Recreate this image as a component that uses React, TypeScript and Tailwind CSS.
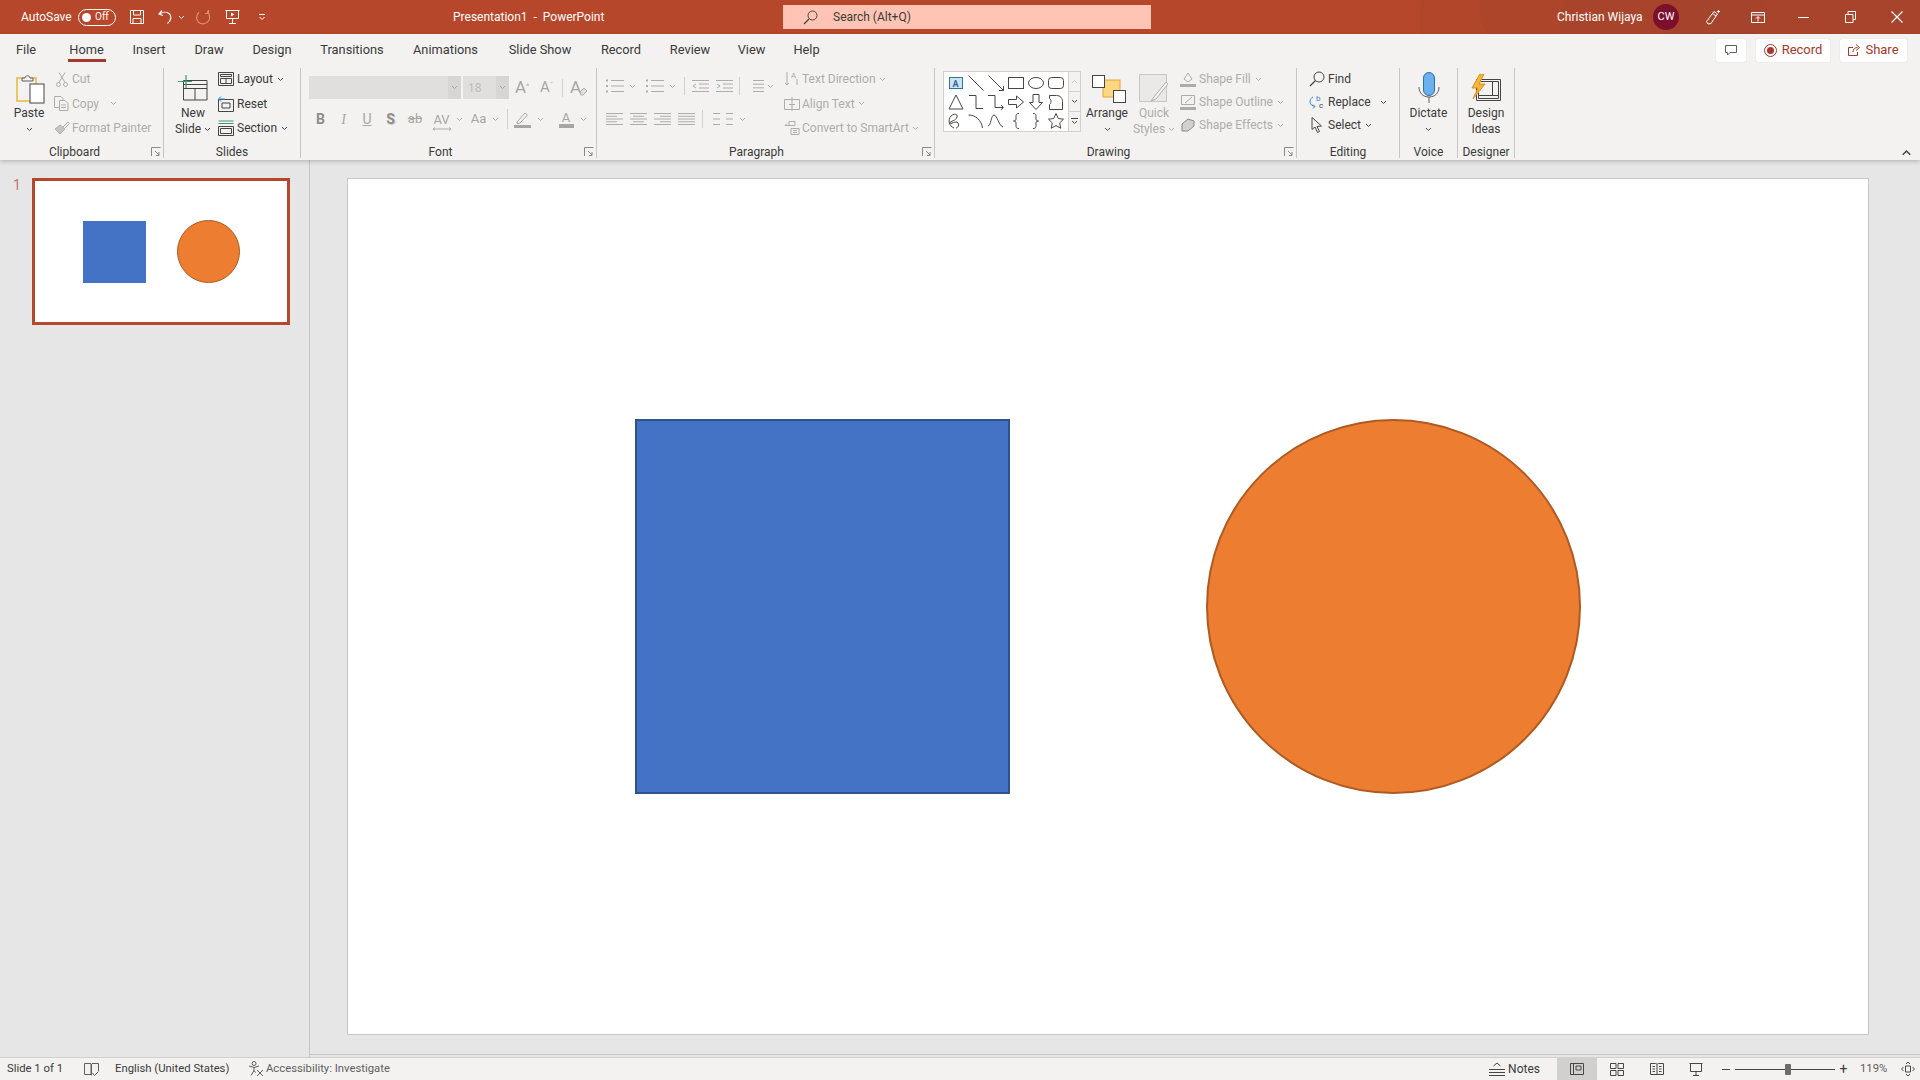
import type { ReactNode } from "react";

const DIS = "#aeacaa";
const INK = "#484644";

function Chev({ color = INK, className = "" }: { color?: string; className?: string }) {
  return (
    <svg width="7" height="5" viewBox="0 0 7 5" className={className}>
      <path d="M1 1l2.5 2.5L6 1" fill="none" stroke={color} strokeWidth="1" />
    </svg>
  );
}

function Ico({ w = 16, h = 16, children, className = "" }: { w?: number; h?: number; children: ReactNode; className?: string }) {
  return (
    <svg width={w} height={h} viewBox={`0 0 ${w} ${h}`} fill="none" strokeWidth="1" className={`shrink-0 ${className}`}>
      {children}
    </svg>
  );
}

// justified / aligned text lines, x1 and x2 per line
function Lines({ w = 17, rows }: { w?: number; rows: [number, number][] }) {
  return (
    <Ico w={w} h={14}>
      {rows.map(([a, b], i) => (
        <path key={i} d={`M${a} ${1.5 + (i * 11) / (rows.length - 1)}H${b}`} stroke={DIS} />
      ))}
    </Ico>
  );
}

function Bullets() {
  return (
    <Ico w={18} h={14}>
      {[1.5, 7, 12.5].map((y) => (
        <g key={y}>
          <rect x="0" y={y - 1} width="2" height="2" fill={DIS} />
          <path d={`M5 ${y}H18`} stroke={DIS} />
        </g>
      ))}
    </Ico>
  );
}

function Indent({ flip }: { flip?: boolean }) {
  return (
    <Ico w={17} h={14}>
      <path d="M0 1.500H17M7 5H17M7 9H17M0 12.500H17" stroke={DIS} />
      <path d={flip ? "M1 5l3 2-3 2" : "M4 5L1 7l3 2"} stroke="#8fb4d4" />
    </Ico>
  );
}

function Launcher() {
  return (
    <svg width="10" height="10" viewBox="0 0 10 10" className="absolute right-[2px] bottom-[1px]" fill="none" stroke="#8a8886">
      <path d="M.5 9V.5H9.5M4 4l4 4M8 5v3.5H5" />
    </svg>
  );
}

function Group({ label, className, labelClass = "", launcher, children }: { label: string; className: string; labelClass?: string; launcher?: boolean; children: ReactNode }) {
  return (
    <div className={`relative flex h-[90px] shrink-0 flex-col border-r border-[#c8c6c4] ${className}`}>
      <div className="flex h-[78px]">{children}</div>
      <div className={`h-[12px] text-center text-[12px] leading-[12px] text-[#3b3a39] ${labelClass}`}>{label}</div>
      {launcher && <Launcher />}
    </div>
  );
}

function BigBtn({ icon, lines, className, disabled, chevOwnLine = true }: { icon: ReactNode; lines: string[]; className: string; disabled?: boolean; chevOwnLine?: boolean }) {
  const c = disabled ? DIS : INK;
  return (
    <div className={`flex shrink-0 flex-col items-center text-[12px] leading-[16px] ${disabled ? "text-[#aeacaa]" : "text-[#3b3a39]"} ${className}`}>
      <div className="flex h-[37px] items-center justify-center">{icon}</div>
      <div className="text-center">{lines[0]}</div>
      {lines[1] ? (
        <div className="flex items-center gap-[3px]">
          {lines[1]}
          {chevOwnLine && <Chev color={c} />}
        </div>
      ) : (
        <div className="flex h-[16px] items-center">
          <Chev color={c} />
        </div>
      )}
    </div>
  );
}

function SmallBtn({ icon, label, chev, disabled, h = "h-[22px]", gap = "gap-[2px]", iconBox = "w-[17px]", after }: { icon: ReactNode; label: string; chev?: boolean; disabled?: boolean; h?: string; gap?: string; iconBox?: string; after?: string }) {
  return (
    <div className={`flex items-center text-[12px] ${h} ${gap} ${disabled ? "text-[#aeacaa]" : "text-[#3b3a39]"}`}>
      <div className={`flex justify-center ${iconBox}`}>{icon}</div>
      <span className={after}>{label}</span>
      {chev && <Chev color={disabled ? DIS : INK} className="ml-[1px]" />}
    </div>
  );
}

function Sep({ className = "" }: { className?: string }) {
  return <div className={`w-px shrink-0 bg-[#d2d0ce] ${className}`} />;
}

function TitleBar() {
  return (
    <div className="relative flex h-[34px] shrink-0 items-center overflow-hidden bg-[#b7472a] text-[12px] text-white">
      <svg className="absolute right-0 top-0" width="500" height="34" viewBox="0 0 500 34">
        <circle cx="40" cy="24" r="44" fill="#b1462a" />
        <circle cx="120" cy="6" r="60" fill="#ad452b" />
        <circle cx="210" cy="30" r="70" fill="#a8442b" />
        <circle cx="320" cy="8" r="80" fill="#a5432c" />
        <circle cx="430" cy="30" r="90" fill="#a8442b" />
      </svg>
      <span className="relative ml-[21px] w-[57px]">AutoSave</span>
      <div className="relative flex h-[17px] w-[38px] items-center rounded-full border border-white pl-[3px]">
        <div className="h-[9px] w-[9px] rounded-full bg-white" />
        <span className="ml-[4px] text-[10px] leading-none">Off</span>
      </div>
      <div className="relative ml-[13px] flex w-[28px] items-center">
        <Ico>
          <path d="M1.5 1.5h13v13h-13zM4.5 1.5v4.5h7V1.5M4 14.5V9.5h8v5" stroke="#fff" />
        </Ico>
      </div>
      <div className="relative flex w-[38px] items-center gap-[4px]">
        <Ico w={17}>
          <path d="M5 1.5L2 5l4 1.5M2.5 5.2C5 3 9 2.500 12 4.500c3 2.500 2.500 6.500-1.500 10" stroke="#fff" strokeWidth="1.2" />
        </Ico>
        <Chev color="#fff" />
      </div>
      <div className="relative flex w-[30px] items-center">
        <Ico w={17}>
          <path d="M12 2.500C15 5 15.500 9 13.500 12c-2.500 3.500-7 3.800-10 1.300C.8 10.800 1 6 4 3.200M13.500 1v3.500H10" stroke="#dc8f78" strokeWidth="1.2" />
        </Ico>
      </div>
      <div className="relative flex w-[33px] items-center">
        <Ico w={15}>
          <path d="M.5 1.500h14M1.500 1.500v8h12v-8M7.500 9.500v4.500M4 14.500h7" stroke="#fff" />
          <path d="M6 3.500l3.500 2-3.500 2z" fill="#fff" />
        </Ico>
      </div>
      <svg width="8" height="8" viewBox="0 0 8 8" className="relative">
        <path d="M1 1.500h6M1.500 4l2.500 2.500L6.500 4" fill="none" stroke="#fff" />
      </svg>
      <span className="relative ml-[187px] w-[330px]">Presentation1&nbsp; -&nbsp; PowerPoint</span>
      <div className="relative flex h-[24px] w-[368px] items-center bg-[#ffc4b3] pl-[20px] text-[#3b3a39]">
        <Ico w={15} h={15}>
          <circle cx="9.500" cy="5.500" r="4.500" stroke="#444" />
          <path d="M6 9l-5 5" stroke="#444" strokeWidth="1.3" />
        </Ico>
        <span className="ml-[15px]">Search (Alt+Q)</span>
      </div>
      <span className="relative ml-[406px] w-[96px]">Christian Wijaya</span>
      <div className="relative flex h-[26px] w-[26px] items-center justify-center rounded-full bg-[#7d0f2c] text-[11px]">CW</div>
      <div className="relative ml-[26px] flex w-[46px]">
        <Ico w={17}>
          <path d="M3 15L1.500 12.500 9 2.500l3.500 2.500L6 14.500zM7.500 4.500l3.500 2.500M13.500 1v3M12 2.500h3" stroke="#fff" />
        </Ico>
      </div>
      <div className="relative flex w-[47px]">
        <Ico w={14} h={14}>
          <path d="M.5 2.500h13v10H.500zM.5 5h13M7 11.500V7M5 8.500L7 6.500l2 2" stroke="#fff" />
        </Ico>
      </div>
      <div className="relative flex w-[47px]">
        <Ico w={11} h={11}>
          <path d="M0 5.500h11" stroke="#fff" />
        </Ico>
      </div>
      <div className="relative flex w-[46px]">
        <Ico w={11} h={12}>
          <path d="M.5 3.500h7.500v8H.5zM3 3.500V.5h7.500v8H8" stroke="#fff" />
        </Ico>
      </div>
      <Ico w={12} h={12} className="relative">
        <path d="M.5.5l11 11M11.500.5l-11 11" stroke="#fff" strokeWidth="1.200" />
      </Ico>
    </div>
  );
}

const tabs: [string, string][] = [
  ["File", "w-[52px]"],
  ["Home", "w-[69px]"],
  ["Insert", "w-[56px]"],
  ["Draw", "w-[64px]"],
  ["Design", "w-[62px]"],
  ["Transitions", "w-[98px]"],
  ["Animations", "w-[89px]"],
  ["Slide Show", "w-[100px]"],
  ["Record", "w-[62px]"],
  ["Review", "w-[76px]"],
  ["View", "w-[47px]"],
  ["Help", "w-[63px]"],
];

function TabRow() {
  return (
    <div className="flex h-[32px] items-center bg-[#f3f2f1] text-[12.800px] text-[#3b3a39]">
      {tabs.map(([t, w]) => (
        <div key={t} className={`relative flex h-full items-center justify-center ${w}`}>
          {t}
          {t === "Home" && <div className="absolute left-[16px] right-[15px] bottom-[4px] h-[3px] bg-[#a5372b]" />}
        </div>
      ))}
      <div className="ml-auto mr-[13px] flex items-center gap-[10px] text-[13px] text-[#a5372b]">
        <div className="flex h-[23px] w-[30px] items-center justify-center rounded-[2px] bg-white shadow-[0_0_1px_rgba(0,0,0,0.2)]">
          <Ico w={12} h={12}>
            <path d="M.5 1.500h11v7H5l-2.500 2.500V8.500H.5z" stroke="#605e5c" />
          </Ico>
        </div>
        <div className="flex h-[23px] w-[74px] items-center justify-center gap-[5px] rounded-[2px] bg-white shadow-[0_0_1px_rgba(0,0,0,0.2)]">
          <svg width="13" height="13" viewBox="0 0 13 13">
            <circle cx="6.500" cy="6.500" r="6" fill="none" stroke="#a5372b" />
            <circle cx="6.500" cy="6.500" r="3.500" fill="#a5372b" />
          </svg>
          Record
        </div>
        <div className="flex h-[23px] w-[67px] items-center justify-center gap-[5px] rounded-[2px] bg-white shadow-[0_0_1px_rgba(0,0,0,0.2)]">
          <Ico w={12} h={12}>
            <path d="M5 3.500H.5v8h9V8M5 8c0-3 2-4.500 4.500-4.500M8 .5l3.500 3-3.500 3" stroke="#a5372b" />
          </Ico>
          Share
        </div>
      </div>
    </div>
  );
}

function ClipboardGroup() {
  return (
    <Group label="Clipboard" className="w-[164px]" labelClass="pr-[14px]" launcher>
      <BigBtn
        className="ml-[9px] w-[40px]"
        lines={["Paste"]}
        icon={
          <svg width="30" height="30" viewBox="0 0 30 30" fill="none" className="ml-[3px] mt-[5px]">
            <rect x="1" y="4" width="19" height="23" fill="#f3f2f1" stroke="#e8b83c" strokeWidth="1.500" />
            <path d="M6 7V4h3c0-3 5-3 5 0h3v3z" fill="#f3f2f1" stroke="#605e5c" />
            <rect x="14" y="10" width="14" height="19" fill="#fff" stroke="#444" />
          </svg>
        }
      />
      <div className="ml-[4px] flex flex-col gap-[2.500px]">
        <SmallBtn disabled label="Cut" icon={
          <Ico w={12} h={15}>
            <path d="M3 .5l6 10M9 .5l-6 10" stroke={DIS} />
            <circle cx="2.500" cy="12.500" r="2" stroke={DIS} />
            <circle cx="9.500" cy="12.500" r="2" stroke={DIS} />
          </Ico>
        } />
        <SmallBtn disabled label="Copy" chev after="mr-[8px]" icon={
          <Ico w={15} h={15}>
            <path d="M5 11.500H.5V.5H7l2 2v2M5.500 4.500H11l3 3v7H5.500zM7 9h5M7 11.500h5" stroke={DIS} />
          </Ico>
        } />
        <SmallBtn disabled label="Format Painter" icon={
          <Ico w={16} h={14}>
            <path d="M1 8l5-4 5 4-5 5z" fill="#c8c6c4" stroke={DIS} />
            <path d="M9 6l5-5 1.500 1.500-5 5" stroke={DIS} />
          </Ico>
        } />
      </div>
    </Group>
  );
}

function SlidesGroup() {
  return (
    <Group label="Slides" className="w-[137px]">
      <BigBtn
        className="ml-[7px] w-[44px]"
        lines={["New", "Slide"]}
        icon={
          <svg width="30" height="26" viewBox="0 0 30 26" fill="none" className="mt-[3px]">
            <path d="M5.500 5.500H29V25H5.500zM5.500 9.500H29M5.500 13.500H29M17 13.500V25" stroke="#444" />
            <path d="M8 0v13M0 6.500h14" stroke="#3d9970" strokeWidth="1.200" />
          </svg>
        }
      />
      <div className="ml-[2px] flex flex-col gap-[2.500px]">
        <SmallBtn label="Layout" chev gap="gap-[3px]" icon={
          <Ico>
            <path d="M.5 1.500h15v13H.5zM2.500 3.500h11v2h-11zM2.500 7.500h11v5h-11zM8 7.500v5" stroke="#444" />
          </Ico>
        } />
        <SmallBtn label="Reset" gap="gap-[3px]" icon={
          <Ico>
            <path d="M.5 3.500h15v12H.5zM4 7h8v5H4z" stroke="#444" />
            <path d="M3 .5L.5 3l2.500 2.500M1 3h6" stroke="#2b88d8" />
          </Ico>
        } />
        <SmallBtn label="Section" chev gap="gap-[3px]" icon={
          <Ico>
            <path d="M.5 1h15M.5 3.500h15" stroke="#3d9970" />
            <path d="M.5 6.500h15v9H.5zM2.500 8.500h11v5h-11z" stroke="#444" />
          </Ico>
        } />
      </div>
    </Group>
  );
}

function FItem({ w, children }: { w: string; children: ReactNode }) {
  return <div className={`flex shrink-0 items-center justify-center gap-[6px] ${w}`}>{children}</div>;
}

function FontGroup() {
  return (
    <Group label="Font" className="w-[296px]" labelClass="pr-[16px]" launcher>
      <div className="ml-[8px] flex flex-col pt-[8px] text-[#a8a6a4]">
        <div className="flex h-[23px] items-center">
          <div className="h-full w-[139px] bg-[#e1dfdd]" />
          <div className="flex h-full w-[13px] items-center justify-center bg-[#d8d6d4]"><Chev color="#a8a6a4" /></div>
          <div className="ml-[2px] flex h-full w-[33px] items-center bg-[#e1dfdd] pl-[5px] text-[12px] text-[#bdbbb9]">18</div>
          <div className="flex h-full w-[13px] items-center justify-center bg-[#d8d6d4]"><Chev color="#a8a6a4" /></div>
          <div className="ml-[6px] w-[19px] text-[17px] leading-none">A<sup className="text-[8px]">^</sup></div>
          <div className="ml-[6px] w-[19px] text-[15px] leading-none">A<sup className="text-[8px]">ˇ</sup></div>
          <Sep className="ml-[3px] h-[18px]" />
          <div className="relative ml-[7px] text-[17px] leading-none">
            A<span className="text-[11px]">ₒ</span>
            <svg width="9" height="9" viewBox="0 0 9 9" className="absolute right-[-3px] bottom-[0px]">
              <path d="M1 5l4-4 3 3-4 4H2z" fill="#e1dfdd" stroke={DIS} />
            </svg>
          </div>
        </div>
        <div className="mt-[8px] flex h-[24px] items-center text-[13px]">
          <FItem w="w-[23px]"><b className="text-[14px] font-bold text-[#8f8d8b]">B</b></FItem>
          <FItem w="w-[23px]"><i className="text-[14px] font-['Liberation_Serif',serif]">I</i></FItem>
          <FItem w="w-[24px]"><span className="text-[14px] underline">U</span></FItem>
          <FItem w="w-[23px]"><b className="text-[14px] font-bold text-[#8f8d8b] [text-shadow:1px_1px_0_#d2d0ce]">S</b></FItem>
          <FItem w="w-[26px]"><span className="line-through">ab</span></FItem>
          <FItem w="w-[40px]">
            <span className="relative leading-none">
              AV
              <svg width="18" height="4" viewBox="0 0 18 4" className="absolute left-0 top-[14px]">
                <path d="M0 2h18M2 .5L0 2l2 1.500M16 .5L18 2l-2 1.500" fill="none" stroke={DIS} />
              </svg>
            </span>
            <Chev color={DIS} />
          </FItem>
          <FItem w="w-[34px]">Aa<Chev color={DIS} /></FItem>
          <Sep className="ml-[5px] h-[20px]" />
          <div className="ml-[6px] flex w-[40px] items-center gap-[6px]">
            <Ico w={17} h={17}>
              <path d="M3 11L11 2l2.500 2-8 8.500H3z" stroke="#a8a6a4" />
              <path d="M0 14h17v3H0z" fill="#a8a6a4" />
            </Ico>
            <Chev color={DIS} />
          </div>
          <div className="ml-[4px] flex items-center gap-[6px]">
            <div className="flex w-[16px] flex-col items-center leading-[13px]">
              A
              <div className="h-[4px] w-[15px] bg-[#a8a6a4]" />
            </div>
            <Chev color={DIS} />
          </div>
        </div>
      </div>
    </Group>
  );
}

function ParagraphGroup() {
  return (
    <Group label="Paragraph" className="w-[338px]" labelClass="pr-[18px]" launcher>
      <div className="ml-[9px] flex w-[178px] shrink-0 flex-col pt-[8px]">
        <div className="flex h-[20px] items-center">
          <div className="flex w-[40px] items-center gap-[5px]"><Bullets /><Chev color={DIS} /></div>
          <div className="flex w-[38px] items-center gap-[5px]"><Bullets /><Chev color={DIS} /></div>
          <Sep className="h-[18px]" />
          <div className="ml-[7px]"><Indent /></div>
          <div className="ml-[7px]"><Indent flip /></div>
          <Sep className="ml-[6px] h-[18px]" />
          <div className="ml-[7px] flex items-center gap-[3px]">
            <Lines rows={[[6, 17], [6, 17], [6, 17], [6, 17]]} />
            <Chev color={DIS} />
          </div>
        </div>
        <div className="mt-[13px] flex h-[20px] items-center gap-[7px]">
          <Lines rows={[[0, 17], [0, 11], [0, 17], [0, 11], [0, 17]]} />
          <Lines rows={[[0, 17], [3, 14], [0, 17], [3, 14], [0, 17]]} />
          <Lines rows={[[0, 17], [6, 17], [0, 17], [6, 17], [0, 17]]} />
          <Lines rows={[[0, 17], [0, 17], [0, 17], [0, 17], [0, 17]]} />
          <Sep className="h-[18px]" />
          <div className="ml-[3px] flex items-center gap-[5px]">
            <Lines rows={[[0, 7], [0, 7], [0, 7]]} w={8} />
            <Lines rows={[[0, 7], [0, 7], [0, 7]]} w={8} />
            <Chev color={DIS} />
          </div>
        </div>
      </div>
      <div className="flex flex-col gap-[2.500px]">
        <SmallBtn disabled label="Text Direction" chev iconBox="w-[16px]" icon={
          <Ico>
            <path d="M3 1v13M1 12l2 2 2-2M13 14V8" stroke={DIS} />
            <text x="7" y="7" fontSize="8" fill={DIS}>A</text>
          </Ico>
        } />
        <SmallBtn disabled label="Align Text" chev iconBox="w-[16px]" icon={
          <Ico>
            <path d="M.5 3.500h15v10H.5zM8 1v14M5 8.500h6" stroke={DIS} />
          </Ico>
        } />
        <SmallBtn disabled label="Convert to SmartArt" chev iconBox="w-[16px]" icon={
          <Ico>
            <path d="M5 1.500h6v4H5zM1 5.500h5M1 5.500l2-2M7 8.500h8v6H7zM9 10.500h4M9 12.500h4" stroke={DIS} />
          </Ico>
        } />
      </div>
    </Group>
  );
}

const S = "#484644";
const shapes: ReactNode[] = [
  <g key="a"><rect x="2.500" y="3.500" width="13" height="11" fill="#cfe3f5" stroke="#2a7a8a" /><text x="5.500" y="12.500" fontSize="9" fontWeight="700" fill="#2a6a9a">A</text></g>,
  <path key="b" d="M1.500 1.500l15 15" stroke={S} />,
  <path key="c" d="M1.500 1.500l15 15M16.500 12v4.500H12" stroke={S} />,
  <rect key="d" x="1.500" y="3.500" width="15" height="11" stroke={S} />,
  <ellipse key="e" cx="9" cy="9" rx="7.500" ry="5.500" stroke={S} />,
  <rect key="f" x="1.500" y="3.500" width="15" height="11" rx="3" stroke={S} />,
  <path key="g" d="M9 2l7 14H2z" stroke={S} />,
  <path key="h" d="M2 2.500h7v13h7" stroke={S} />,
  <path key="i" d="M1 2.500h7v12h8M14 12l2.500 2.500L14 17" stroke={S} />,
  <path key="j" d="M1.500 6.500h8V3l7 6-7 6v-3.500h-8z" stroke={S} />,
  <path key="k" d="M6 1.500h6v8h3.500L9 16.500 2.500 9.500H6z" stroke={S} />,
  <path key="l" d="M2.500 2.500h7c4 0 6 3 6 6v8h-13v-5c2-1 2-5 0-6z" stroke={S} />,
  <path key="m" d="M7 16C2 14 .5 8 4 4c3-3 7-2 6 1-1 4-7 4-7 6 0 2 6-3 8 0s-1 5-2 5" stroke={S} />,
  <path key="n" d="M1.500 3c7 0 13 5 14 13" stroke={S} />,
  <path key="o" d="M1 14C4 14 4 3 7 3s5 11 9 12" stroke={S} />,
  <path key="p" d="M12 1.500C9 1.500 9 3 9 5v2c0 1.500-1 2-2.500 2C8 9 9 9.500 9 11v2c0 2 0 3.500 3 3.500" stroke={S} />,
  <path key="q" d="M6 1.500C9 1.500 9 3 9 5v2c0 1.500 1 2 2.500 2C10 9 9 9.500 9 11v2c0 2 0 3.500-3 3.500" stroke={S} />,
  <path key="r" d="M9 1.500l2.300 5 5.200.7-3.800 3.700 1 5.300L9 13.600l-4.700 2.600 1-5.300L1.500 7.200l5.200-.7z" stroke={S} />,
];

function DrawingGroup() {
  return (
    <Group label="Drawing" className="w-[362px]" labelClass="pr-[14px]" launcher>
      <div className="ml-[8px] mt-[3px] flex h-[61px] w-[138px] shrink-0 border border-[#d2d0ce]">
        <div className="grid w-[124px] grid-cols-6 grid-rows-3 bg-white px-[2px] py-[1px]">
          {shapes.map((s, i) => (
            <div key={i} className="flex items-center justify-center">
              <svg width="18" height="18" viewBox="0 0 18 18" fill="none">{s}</svg>
            </div>
          ))}
        </div>
        <div className="flex flex-1 flex-col border-l border-[#d2d0ce]">
          <div className="flex flex-1 items-center justify-center"><Chev color="#c8c6c4" className="rotate-180" /></div>
          <div className="flex flex-1 items-center justify-center border-y border-[#d2d0ce]"><Chev /></div>
          <div className="flex flex-1 flex-col items-center justify-center gap-[1px]">
            <div className="h-px w-[7px] bg-[#484644]" />
            <Chev />
          </div>
        </div>
      </div>
      <BigBtn
        className="ml-[4px] w-[44px]"
        lines={["Arrange"]}
        icon={
          <svg width="34" height="28" viewBox="0 0 34 28" fill="none" className="ml-[3px] mt-[5px]">
            <rect x="11" y="5" width="17" height="17" fill="#fcd77f" stroke="#e8a33c" />
            <rect x=".5" y=".5" width="12" height="12" fill="#fff" stroke="#444" />
            <rect x="21.500" y="15.500" width="12" height="12" fill="#fff" stroke="#444" />
          </svg>
        }
      />
      <BigBtn
        className="ml-[3px] w-[44px]"
        disabled
        lines={["Quick", "Styles"]}
        icon={
          <svg width="30" height="30" viewBox="0 0 30 30" fill="none" className="mt-[5px]">
            <rect x=".5" y=".5" width="27" height="27" fill="#ebe9e7" stroke="#c8c6c4" />
            <path d="M27 8L15 23l-3 4 5-2L29 10z" fill="#f3f2f1" stroke="#b3b1af" />
          </svg>
        }
      />
      <div className="ml-[4px] flex flex-col gap-[1px]">
        <SmallBtn disabled label="Shape Fill" chev iconBox="w-[16px]" gap="gap-[3px]" icon={
          <Ico>
            <path d="M4 8l4-6 4 6-4 3z" stroke={DIS} />
            <path d="M0 13h16v3H0z" fill={DIS} />
          </Ico>
        } />
        <SmallBtn disabled label="Shape Outline" chev iconBox="w-[16px]" gap="gap-[3px]" icon={
          <Ico>
            <path d="M1.500 1.500h13v9h-13zM5 9l7-6" stroke={DIS} />
            <path d="M0 13h16v3H0z" fill={DIS} />
          </Ico>
        } />
        <SmallBtn disabled label="Shape Effects" chev iconBox="w-[16px]" gap="gap-[3px]" icon={
          <Ico>
            <path d="M2 7l6-5 6 2v5l-6 5H2z" fill="#d2d0ce" stroke="#8a8886" />
          </Ico>
        } />
      </div>
    </Group>
  );
}

function EditingGroup() {
  return (
    <Group label="Editing" className="w-[103px]">
      <div className="ml-[12px] flex flex-col gap-[1px]">
        <SmallBtn label="Find" gap="gap-[3px]" h="h-[22px]" iconBox="w-[16px]" icon={
          <Ico>
            <circle cx="10" cy="6" r="5" stroke="#484644" />
            <path d="M6.500 9.500L1 15" stroke="#484644" strokeWidth="1.300" />
          </Ico>
        } />
        <div className="flex items-center">
          <SmallBtn label="Replace" gap="gap-[3px]" iconBox="w-[16px]" icon={
            <Ico>
              <path d="M4 3C1 4 0 9 2.500 11l3 1.500M4 10.500l2 2-2 2" stroke="#2b88d8" />
              <text x="7" y="7" fontSize="8" fill="#2b88d8">b</text>
              <text x="10" y="14" fontSize="8" fill="#444">c</text>
            </Ico>
          } />
          <Chev className="ml-[9px]" />
        </div>
        <SmallBtn label="Select" chev gap="gap-[3px]" iconBox="w-[16px]" icon={
          <Ico>
            <path d="M3 .5v12l3-2.500 2.500 5.500 2-1L8 9.500l4.500-.5z" stroke="#484644" />
          </Ico>
        } />
      </div>
    </Group>
  );
}

function Ribbon() {
  return (
    <div className="relative z-10 flex h-[126px] shrink-0 flex-col bg-[#f3f2f1] shadow-[0_2px_4px_rgba(0,0,0,0.18)]">
      <TabRow />
      <div className="flex items-start pt-[2px]">
        <ClipboardGroup />
        <SlidesGroup />
        <FontGroup />
        <ParagraphGroup />
        <DrawingGroup />
        <EditingGroup />
        <Group label="Voice" className="w-[58px]">
          <BigBtn
            className="w-full"
            lines={["Dictate"]}
            icon={
              <svg width="22" height="32" viewBox="0 0 22 32" fill="none" className="mt-[3px]">
                <rect x="5.500" y=".5" width="11" height="23" rx="5.500" fill="#6cb0ee" stroke="#2b6fb0" />
                <path d="M1 15c0 6 4 10 10 10s10-4 10-10M11 25v6" stroke="#605e5c" />
              </svg>
            }
          />
        </Group>
        <Group label="Designer" className="w-[57px]">
          <BigBtn
            className="w-full"
            chevOwnLine={false}
            lines={["Design", "Ideas"]}
            icon={
              <svg width="30" height="28" viewBox="0 0 30 28" fill="none" className="mt-[2px]">
                <path d="M5.500 5.500h24v21h-24zM7.500 7.500h20v17h-20zM7.500 21.500h20M21.500 7.500v14" stroke="#444" />
                <path d="M9 0L1 14h6l-5 11 12-15H8l5-10z" fill="#f7b733" stroke="#d98b1f" />
              </svg>
            }
          />
        </Group>
        <div className="ml-auto mr-[10px] mt-[82px]">
          <Chev className="rotate-180 scale-150" color="#484644" />
        </div>
      </div>
    </div>
  );
}

function StatusBar() {
  return (
    <div className="flex h-[23px] shrink-0 items-center border-t border-[#d2d0ce] bg-[#f3f2f1] text-[11.300px] text-[#3b3a39]">
      <span className="ml-[7px] w-[77px]">Slide 1 of 1</span>
      <Ico w={15} h={15}>
        <path d="M.5 1.500h6.500v11H.5zM8 1.500h6.500V9M7.500 2v11.500M8.500 11l2 2.500 4-4" stroke="#605e5c" />
      </Ico>
      <span className="ml-[16px] w-[133px]">English (United States)</span>
      <Ico>
        <circle cx="6" cy="2.500" r="2" stroke="#605e5c" />
        <path d="M1 5l5 1.500L11 5M6 6.500v3l-3 5M6 9.500l1.500 2M9 9l6 6M15 9l-6 6" stroke="#605e5c" />
      </Ico>
      <span className="ml-[2px] text-[#605e5c]">Accessibility: Investigate</span>
      <div className="ml-auto flex h-full items-center">
        <Ico w={16} h={14}>
          <path d="M0 7.500h16M0 10.500h16M0 13.500h16M4.500 4L8 1l3.500 3" stroke="#484644" />
        </Ico>
        <span className="ml-[3px] mr-[17px] text-[12px]">Notes</span>
        <div className="flex h-full w-[40px] items-center justify-center bg-[#d2d0ce]">
          <Ico w={14} h={14}>
            <path d="M.5 1.500h13v11H.5zM3.500 1.500v11M6 4h5v4H6z" stroke="#484644" />
          </Ico>
        </div>
        <div className="flex w-[40px] justify-center">
          <Ico w={14} h={14}>
            <path d="M.5 1.500h5.500v5H.5zM8 1.500h5.500v5H8zM.5 8.500h5.500v5H.5zM8 8.500h5.500v5H8z" stroke="#484644" />
          </Ico>
        </div>
        <div className="flex w-[39px] justify-center">
          <Ico w={14} h={14}>
            <path d="M.5 1.500h5c1 0 1.500 .5 1.500 1 0-.5.5-1 1.500-1h5v11h-13zM7 2.500v10M2.500 4.500h2.500M2.500 7h2.500M2.500 9.500h2.500M9 4.500h2.500M9 7h2.500M9 9.500h2.500" stroke="#484644" />
          </Ico>
        </div>
        <div className="flex w-[39px] justify-center">
          <Ico w={14} h={14}>
            <path d="M.5 1.500h13M1.500 1.500v8h11v-8M7 9.500v4M4 13.500h6" stroke="#484644" />
          </Ico>
        </div>
        <div className="ml-[7px] h-px w-[8px] bg-[#484644]" />
        <div className="relative ml-[5px] flex h-full w-[100px] items-center">
          <div className="h-px w-full bg-[#484644]" />
          <div className="absolute left-[50px] h-[11px] w-[6px] rounded-[1px] bg-[#6e6c6a]" />
        </div>
        <span className="ml-[3px] w-[11px] text-center text-[14px] leading-none">+</span>
        <span className="ml-[11px] w-[41px] text-[#605e5c]">119%</span>
        <svg width="14" height="16" viewBox="0 0 14 16" fill="none" className="mr-[5px]">
          <path d="M4.500 5h5v6h-5zM2.500 6L.5 8l2 2M11.500 6l2 2-2 2M5 3l2-2 2 2M5 13l2 2 2-2" stroke="#484644" />
        </svg>
      </div>
    </div>
  );
}

export default function App() {
  return (
    <div className="flex h-[1080px] w-[1920px] flex-col overflow-hidden bg-[#e6e6e6] font-['Roboto',sans-serif]">
      <TitleBar />
      <Ribbon />
      <div className="flex min-h-0 flex-1">
        <div className="flex w-[310px] shrink-0 border-r border-[#c8c6c4] pl-[13px] pt-[18px]">
          <span className="mt-[-3px] w-[19px] text-[14px] text-[#b7472a] opacity-70">1</span>
          <div className="flex h-[147px] w-[258px] items-center gap-[31px] border-[3px] border-[#b7472a] bg-white pl-[48px]">
            <div className="h-[62px] w-[63px] bg-[#4472c4]" />
            <div className="h-[63px] w-[63px] rounded-full border border-[#ae5a21] bg-[#ed7d31]" />
          </div>
        </div>
        <div className="flex flex-1 flex-col">
          <div className="flex-1 pl-[37px] pt-[18px]">
            <div className="flex h-[857px] w-[1522px] items-center gap-[196px] border border-[#c8c6c4] bg-white pl-[287px]">
              <div className="h-[375px] w-[375px] border-2 border-[#2f528f] bg-[#4472c4]" />
              <div className="h-[375px] w-[375px] rounded-full border-2 border-[#ae5a21] bg-[#ed7d31]" />
            </div>
          </div>
          <div className="h-[3px] border-t border-[#c8c6c4]" />
        </div>
      </div>
      <StatusBar />
    </div>
  );
}
